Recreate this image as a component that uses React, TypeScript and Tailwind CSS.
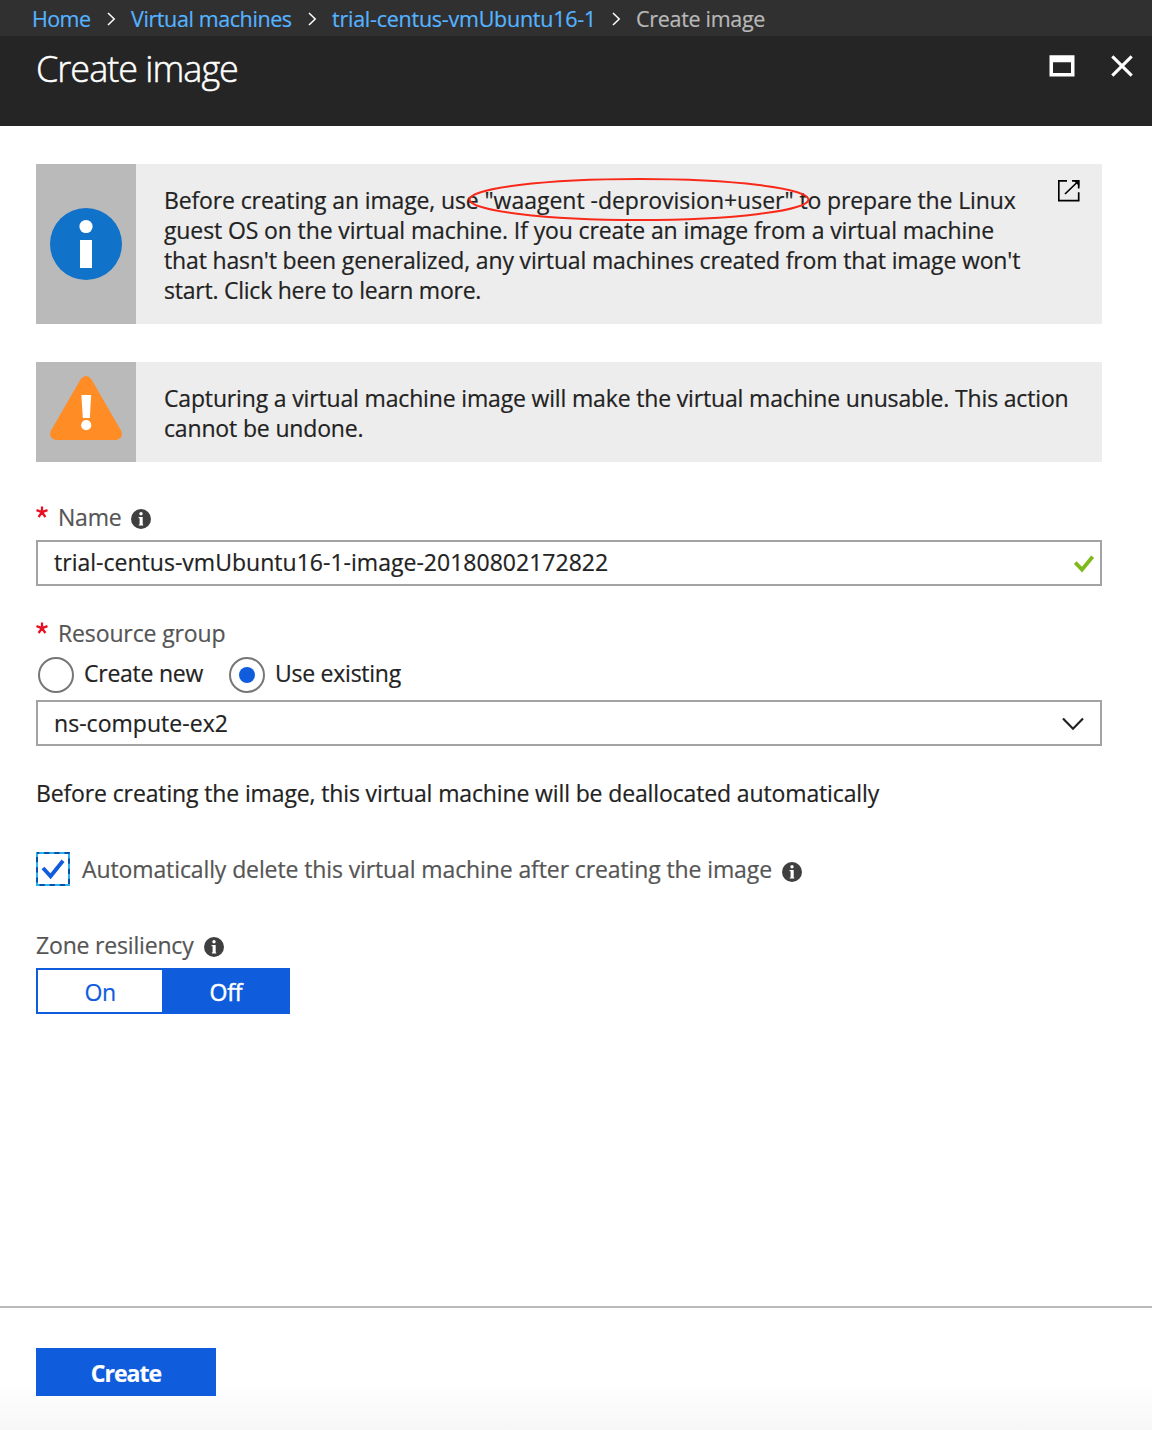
import type { ReactNode } from "react";

function Crumb({ children, className }: { children: ReactNode; className: string }) {
  return <span className={"whitespace-nowrap " + className}>{children}</span>;
}

function CrumbArrow() {
  return (
    <svg className="h-[14px] w-[10px] shrink-0" viewBox="0 0 10 14" fill="none" stroke="#fff" strokeWidth="1.5">
      <path d="M1 1 L7.2 7 L1 13" />
    </svg>
  );
}

function InfoDot({ className = "" }: { className?: string }) {
  return (
    <svg className={"h-5 w-5 shrink-0 " + className} viewBox="0 0 20 20">
      <circle cx="10" cy="10" r="10" fill="#3f3f3f" />
      <circle cx="10" cy="4.8" r="1.7" fill="#fff" />
      <path d="M7.6 8 H11.7 V15.4 H12.2 V16.4 H7.8 V15.4 H8.6 V9.2 H7.6 Z" fill="#fff" />
    </svg>
  );
}

function Required() {
  return (
    <svg className="mt-[4px] h-[13px] w-3 shrink-0" viewBox="0 0 12 13" stroke="#e81123" strokeWidth="2.3" fill="none">
      <path d="M6 6.2 V0.4 M6 6.2 L0.5 4.2 M6 6.2 L11.5 4.2 M6 6.2 L2.6 11 M6 6.2 L9.4 11" />
    </svg>
  );
}

export default function App() {
  return (
    <div className="flex h-[1430px] w-[1152px] flex-col bg-white font-['Open_Sans',sans-serif] text-[23px] leading-[30px] tracking-[-0.13px] text-[#222] [-webkit-text-stroke:0.2px]">
      <nav className="flex h-9 items-center bg-[#303030] pl-8 pt-px text-[21.5px] tracking-[-0.4px]">
        <Crumb className="w-[75px] text-[#55b3ff] tracking-[-0.6px]">Home</Crumb>
        <CrumbArrow />
        <Crumb className="ml-[14px] w-[177px] text-[#55b3ff]">Virtual machines</Crumb>
        <CrumbArrow />
        <Crumb className="ml-[14px] w-[280px] text-[#55b3ff] tracking-[-0.25px]">trial-centus-vmUbuntu16-1</Crumb>
        <CrumbArrow />
        <Crumb className="ml-[14px] text-[#b8b8b8] tracking-[-0.3px]">Create image</Crumb>
      </nav>

      <header className="flex h-[90px] items-start bg-[#252525] pl-9 pr-[19px]">
        <h1 className="mt-[9px] flex-1 whitespace-nowrap text-[36px] font-light leading-[48px] tracking-[-1px] text-white [-webkit-text-stroke:0.5px]">Create image</h1>
        <svg className="mt-[19px] h-[22px] w-[26px]" viewBox="0 0 26 22">
          <path fill="#fff" fillRule="evenodd" d="M0.5 0.3 H25.5 V21.5 H0.5 Z M4 7.2 V18 H22 V7.2 Z" />
        </svg>
        <svg className="ml-9 mt-[19px] h-[22px] w-[22px]" viewBox="0 0 22 22" stroke="#fff" strokeWidth="3.1" fill="none">
          <path d="M1.3 1.3 L20.7 20.7 M20.7 1.3 L1.3 20.7" />
        </svg>
      </header>

      <main className="flex flex-col pl-9 pr-[50px]">
        <section className="mt-[38px] flex h-40 bg-[#ededed]">
          <div className="flex w-[100px] shrink-0 items-center justify-center bg-[#bababa]">
            <svg className="h-[72px] w-[72px]" viewBox="0 0 72 72">
              <circle cx="36" cy="36" r="36" fill="#1172c9" />
              <circle cx="36" cy="18.5" r="6.6" fill="#fff" />
              <path fill="#fff" d="M30 32 H42 V60 H30 Z" />
            </svg>
          </div>
          <div className="ml-7 mt-[21px] flex flex-col whitespace-nowrap">
            <p>
              Before creating an image, use{" "}
              <span className="relative tracking-[-0.02px]">
                "waagent -deprovision+user"
                <svg className="absolute -left-[17px] -top-[7px] h-[44px] w-[344px]" viewBox="0 0 344 44" fill="none">
                  <ellipse cx="172" cy="22.5" rx="169.5" ry="20.5" stroke="#f9291a" strokeWidth="2" />
                </svg>
              </span>{" "}
              to prepare the Linux
            </p>
            <p className="tracking-[-0.12px]">guest OS on the virtual machine. If you create an image from a virtual machine</p>
            <p className="tracking-[-0.15px]">that hasn't been generalized, any virtual machines created from that image won't</p>
            <p className="tracking-[-0.23px]">start. Click here to learn more.</p>
          </div>
          <svg className="ml-auto mr-[22px] mt-4 h-[22px] w-[22px] shrink-0" viewBox="0 0 22 22" fill="none" stroke="#000" strokeWidth="1.7">
            <path d="M9 0.8 H0.8 V20.7 H20.7 V12.3 M7 14 L20.5 1 M14 0.8 H20.7 V8.5" />
            <path d="M15.5 0.5 H21.3 V6.3 Z" fill="#000" stroke="none" />
          </svg>
        </section>

        <section className="mt-[38px] flex h-[100px] bg-[#ededed]">
          <div className="flex w-[100px] shrink-0 justify-center bg-[#bababa] pt-[14px]">
            <svg className="h-[64px] w-[72px]" viewBox="0 0 72 64">
              <path fill="#ff8c24" d="M30.8 3 Q36 -3 41.2 3 L71 54.5 Q74 61.5 66.5 64 H5.5 Q-2 61.5 1 54.5 Z" />
              <path fill="#fff" d="M31.4 19 H41.2 L39.8 42 H32.8 Z" />
              <circle cx="36.2" cy="49.2" r="5.1" fill="#fff" />
            </svg>
          </div>
          <div className="ml-7 mt-[21px] whitespace-nowrap tracking-[-0.16px]">
            <p>Capturing a virtual machine image will make the virtual machine unusable. This action</p>
            <p>cannot be undone.</p>
          </div>
        </section>

        <label className="mt-10 flex h-[30px] text-[#555]">
          <Required />
          <span className="ml-[10px] w-[73px] tracking-[-0.2px]">Name</span>
          <InfoDot className="mt-[7px]" />
        </label>
        <div className="mt-2 flex h-[46px] items-center border-2 border-[#a3a3a3] pb-[2px] pl-4 pr-[6px]">
          <span className="flex-1 tracking-[0.02px]">trial-centus-vmUbuntu16-1-image-20180802172822</span>
          <svg className="mt-[4px] h-[18px] w-5" viewBox="0 0 20 18" fill="none" stroke="#7fba1b" strokeWidth="3.8">
            <path d="M1.2 7.5 L8 14.6 L18.6 1.6" />
          </svg>
        </div>

        <label className="mt-8 flex h-[30px] text-[#555]">
          <Required />
          <span className="ml-[10px] tracking-[-0.13px]">Resource group</span>
        </label>
        <div className="mt-[9px] flex h-9 items-center pl-[2px] tracking-[-0.25px]">
          <span className="h-9 w-9 rounded-full border-2 border-[#777]" />
          <span className="-mt-1 ml-[10px] w-[145px]">Create new</span>
          <span className="flex h-9 w-9 items-center justify-center rounded-full border-2 border-[#777]">
            <span className="h-4 w-4 rounded-full bg-[#0f5cdd]" />
          </span>
          <span className="-mt-1 ml-[10px]">Use existing</span>
        </div>
        <div className="mt-[7px] flex h-[46px] items-center border-2 border-[#a3a3a3] pl-4 pr-4">
          <span className="flex-1 tracking-[0.04px]">ns-compute-ex2</span>
          <svg className="mt-[2px] h-[14px] w-[22px]" viewBox="0 0 22 14" fill="none" stroke="#222" strokeWidth="2.2">
            <path d="M1 1.5 L11 11.7 L21 1.5" />
          </svg>
        </div>

        <p className="mt-8 whitespace-nowrap">Before creating the image, this virtual machine will be deallocated automatically</p>

        <div className="mt-11 flex h-[34px] items-center text-[#555]">
          <svg className="h-[34px] w-[34px]" viewBox="0 0 34 34" fill="none">
            <path d="M1 1 H33 V33 H1 Z" stroke="#27b4ea" strokeWidth="2" />
            <path d="M1 1 H33 V33 H1 Z" stroke="#0a4fa8" strokeWidth="2" strokeDasharray="5.2 4.94" strokeDashoffset="3" />
            <path d="M7 16 L14.6 24.3 L27 8.8" stroke="#0f5cdd" strokeWidth="3.8" />
          </svg>
          <span className="ml-3 w-[700px] whitespace-nowrap tracking-[-0.11px]">Automatically delete this virtual machine after creating the image</span>
          <InfoDot className="mt-[5px]" />
        </div>

        <label className="mt-11 flex h-[30px] text-[#555]">
          <span className="w-[168px] tracking-[-0.18px]">Zone resiliency</span>
          <InfoDot className="mt-[7px]" />
        </label>
        <div className="mt-2 flex h-[46px] w-[254px] border-2 border-[#0f5cdd] leading-[44px]">
          <span className="w-[124px] text-center text-[#0f5cdd] tracking-[-0.4px]">On</span>
          <span className="flex-1 bg-[#0f5cdd] pl-[2px] text-center text-white [-webkit-text-stroke:0.5px]">Off</span>
        </div>
      </main>

      <footer className="mt-auto h-[124px] border-t-2 border-[#bababa] bg-linear-to-b from-white from-60% to-[#f7f7f7] pl-9 pt-10">
        <button className="block h-12 w-[180px] bg-[#0f5cdd] pt-px text-center text-[23px] font-bold tracking-[-0.95px] text-white">Create</button>
      </footer>
    </div>
  );
}
